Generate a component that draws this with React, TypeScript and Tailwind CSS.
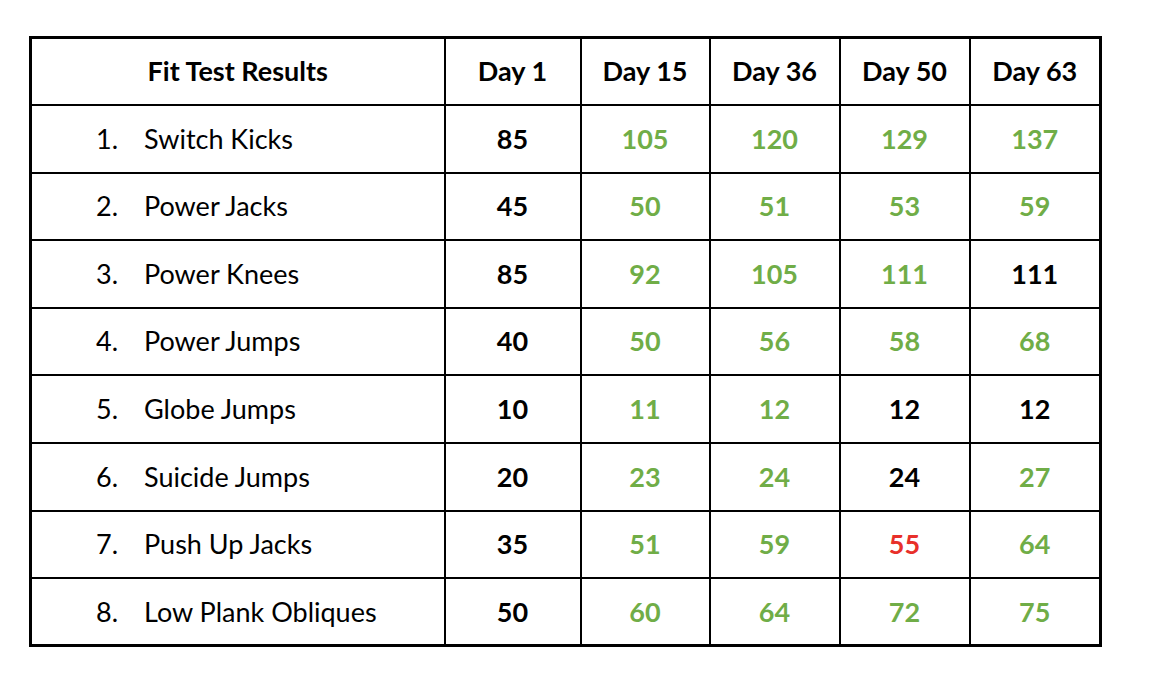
const GREEN = "text-[#70ad47]";
const RED = "text-[#e8302a]";
const BLACK = "text-black";

type Cell = [number, "g" | "r" | "k"];

const rows: { name: string; values: Cell[] }[] = [
  { name: "Switch Kicks", values: [[85, "k"], [105, "g"], [120, "g"], [129, "g"], [137, "g"]] },
  { name: "Power Jacks", values: [[45, "k"], [50, "g"], [51, "g"], [53, "g"], [59, "g"]] },
  { name: "Power Knees", values: [[85, "k"], [92, "g"], [105, "g"], [111, "g"], [111, "k"]] },
  { name: "Power Jumps", values: [[40, "k"], [50, "g"], [56, "g"], [58, "g"], [68, "g"]] },
  { name: "Globe Jumps", values: [[10, "k"], [11, "g"], [12, "g"], [12, "k"], [12, "k"]] },
  { name: "Suicide Jumps", values: [[20, "k"], [23, "g"], [24, "g"], [24, "k"], [27, "g"]] },
  { name: "Push Up Jacks", values: [[35, "k"], [51, "g"], [59, "g"], [55, "r"], [64, "g"]] },
  { name: "Low Plank Obliques", values: [[50, "k"], [60, "g"], [64, "g"], [72, "g"], [75, "g"]] },
];

const colour = { g: GREEN, r: RED, k: BLACK };
const days = ["Day 1", "Day 15", "Day 36", "Day 50", "Day 63"];

export default function App() {
  return (
    <div className="h-[683px] w-[1152px] bg-white pl-[29px] pt-[36px] font-['Lato',sans-serif] text-black">
      <table className="w-[1070px] table-fixed border-collapse border-[3px] border-black text-[27px]">
        <colgroup>
          <col className="w-[414px]" />
          <col className="w-[136px]" />
          <col className="w-[129px]" />
          <col className="w-[130px]" />
          <col className="w-[130px]" />
          <col className="w-[131px]" />
        </colgroup>
        <thead>
          <tr className="h-[67.6px]">
            <th className="border-[2.5px] border-black font-bold">Fit Test Results</th>
            {days.map((d) => (
              <th key={d} className="border-[2.5px] border-black font-bold">
                {d}
              </th>
            ))}
          </tr>
        </thead>
        <tbody>
          {rows.map((r, i) => (
            <tr key={r.name} className="h-[67.6px]">
              <td className="border-[2.5px] border-black pl-[64px] text-left">
                <span className="inline-block w-[48px]">{i + 1}.</span>
                {r.name}
              </td>
              {r.values.map(([v, c], j) => (
                <td key={j} className={`border-[2.5px] border-black text-center font-bold ${colour[c]}`}>
                  {v}
                </td>
              ))}
            </tr>
          ))}
        </tbody>
      </table>
    </div>
  );
}
